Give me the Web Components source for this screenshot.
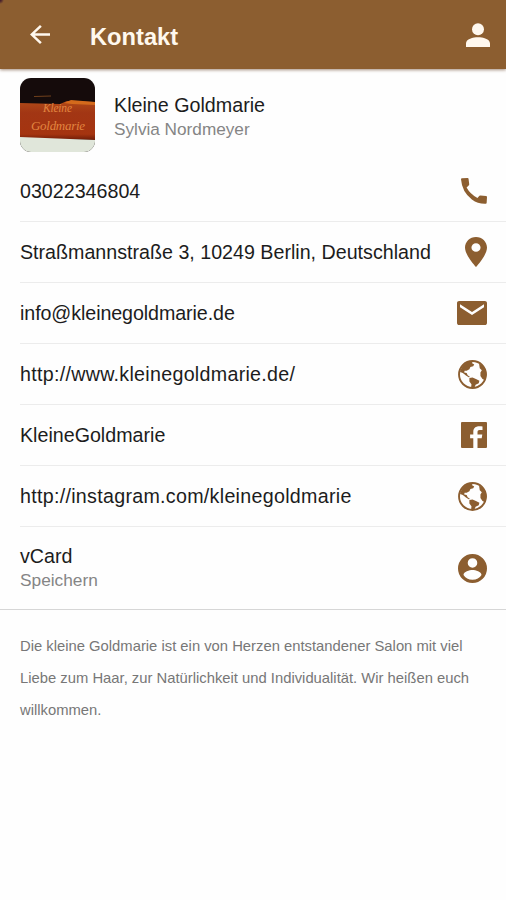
<!DOCTYPE html>
<html lang="de">
<head>
<meta charset="utf-8">
<title>Kontakt</title>
<style>
    body {
        margin: 0;
        background: #fefefe;
        font-family: "Liberation Sans", Arial, sans-serif;
        --color-brand: #8c5e30;
        --color-text: #1c1c1c;
        --color-muted: #858585;
    }
</style>
</head>
<body>
<contact-page></contact-page>

<script>
// [width, height, viewBox, markup]
const ICONS = {
    back: [20, 19, '4 4 16 16', '<path d="M20 11H7.83l5.59-5.59L12 4l-8 8 8 8 1.41-1.41L7.83 13H20v-2z"/>'],
    person: [24, 24, '0 0 24 24', '<circle cx="12" cy="6.3" r="6"/><path d="M12 14.2c-5 0-12 1.6-12 6.4V24h24v-3.4c0-4.8-7-6.4-12-6.4z"/>'],
    call: [26, 26, '0 0 79 79', '<path d="M3 1 20 0Q23 0 23 3L25 19Q25 21 24 22L17 29Q27 48 50 61L56 54Q57 53 59 53L76 55Q79 55 79 58L78 75Q78 78 75 78 52 79 33 65 3 43 0 4 0 1 3 1Z"/>'],
    pin: [22, 30, '5 2 14 20', '<path d="M12 2C8.13 2 5 5.13 5 9c0 5.25 7 13 7 13s7-7.75 7-13c0-3.87-3.13-7-7-7zm0 9.9a2.9 2.9 0 1 1 0-5.8 2.9 2.9 0 0 1 0 5.8z"/>'],
    mail: [30, 24, '2 4 20 16', '<path d="M20.6 4H3.4C2.6 4 2 4.6 2 5.4v13.2c0 .8.6 1.4 1.4 1.4h17.2c.8 0 1.4-.6 1.4-1.4V5.4c0-.8-.6-1.4-1.4-1.4zM20 8.2l-8 5.2-8-5.2v-2l8 5.2 8-5.2v2z"/>'],
    globe: [29, 29, '0 0 84 84', `
        <circle cx="42" cy="42" r="39" fill="none" stroke="currentColor" stroke-width="5.5"/>
        <path d="M7 29 16 14 28 6 44 4 40 9 47 13 44 18 36 20 33 27 25 31 19 31 18 36 25 38 28 44 35 49 31 50 23 45 14 38 6 35Z"/>
        <path d="M33 52 42 51 52 55 62 60 60 67 51 72 47 81 38 80 39 70 33 62Z"/>
        <path d="M61 11 71 16 80 29 83 43 78 59 71 55 65 46 65 36 69 30 63 24Z"/>`],
    facebook: [26, 26, '0 0 26 26', '<path d="M1 0h24a1 1 0 0 1 1 1v24a1 1 0 0 1-1 1h-8.5V16.2h4.2l.6-3.8h-4.8v-2.2c0-1.4.6-2.1 2.1-2.1h2.9V4.5c-.8-.1-2-.2-3.2-.2-3.8 0-6 2.1-6 5.5v2.6H9.1v3.8h3.2V26H1a1 1 0 0 1-1-1V1a1 1 0 0 1 1-1z"/>'],
    contact: [29, 29, '2 2 20 20', '<path fill-rule="evenodd" d="M12 2a10 10 0 1 0 0 20 10 10 0 0 0 0-20zm0 2.9a3.3 3.3 0 1 1 0 6.6 3.3 3.3 0 0 1 0-6.6zm0 14.8c-2.7 0-5-1.3-6.2-3.3 0-2.2 4.1-3.4 6.2-3.4s6.2 1.2 6.2 3.4c-1.2 2-3.5 3.3-6.2 3.3z"/>']
};

class AppIcon extends HTMLElement {
    connectedCallback() {
        const [w, h, box, markup] = ICONS[this.getAttribute('name')];
        this.attachShadow({ mode: 'open' }).innerHTML = `
            <style>
                :host { display: flex; flex-shrink: 0; }
                svg { display: block; fill: currentColor; }
            </style>
            <svg width="${w}" height="${h}" viewBox="${box}" preserveAspectRatio="none">${markup}</svg>
        `;
    }
}

class AppToolbar extends HTMLElement {
    constructor() {
        super();
        this.attachShadow({ mode: 'open' }).innerHTML = `
            <style>
                :host {
                    display: flex;
                    align-items: center;
                    box-sizing: border-box;
                    height: 69px;
                    padding: 0 16px 0 30px;
                    background: radial-gradient(circle at 0 0, #46202c 1px, transparent 4px), var(--color-brand);
                    color: #fff8ee;
                    box-shadow: 0 1px 3px rgba(90, 50, 20, 0.55);
                }
                h1 {
                    flex: 1;
                    margin: 4px 0 0 40px;
                    font-size: 23.7px;
                    line-height: 28px;
                    font-weight: bold;
                }
            </style>
            <app-icon name="back"></app-icon>
            <h1><slot></slot></h1>
            <app-icon name="person"></app-icon>
        `;
    }
}

class SalonLogo extends HTMLElement {
    constructor() {
        super();
        this.attachShadow({ mode: 'open' }).innerHTML = `
            <style>
                :host {
                    display: block;
                    width: 75px;
                    height: 74px;
                    border-radius: 11px;
                    overflow: hidden;
                }
                svg { display: block; }
                text {
                    font-family: "Liberation Serif", serif;
                    font-style: italic;
                    fill: #e28540;
                }
            </style>
            <svg width="75" height="74" viewBox="0 0 75 74">
                <defs>
                    <linearGradient id="wood" x1="0" y1="0" x2="0" y2="1">
                        <stop offset="0" stop-color="#b04a18"/>
                        <stop offset="0.3" stop-color="#a23614"/>
                        <stop offset="0.85" stop-color="#a53410"/>
                        <stop offset="1" stop-color="#6e1c08"/>
                    </linearGradient>
                </defs>
                <rect width="75" height="74" fill="#150b0b"/>
                <path d="M0 25 40 26 47 23 75 24V62L0 60Z" fill="url(#wood)"/>
                <path d="M44 25 51 22 75 24V27L52 26Z" fill="#d46a1c"/>
                <path d="M14 18.5 31 18" stroke="#70401c" stroke-width="1"/>
                <path d="M0 59 75 62V74H0Z" fill="#e0e6da"/>
                <text x="23" y="34" font-size="11.5" textLength="29">Kleine</text>
                <text x="11" y="52" font-size="13" textLength="54">Goldmarie</text>
            </svg>
        `;
    }
}

class ContactHeader extends HTMLElement {
    constructor() {
        super();
        this.attachShadow({ mode: 'open' }).innerHTML = `
            <style>
                :host {
                    display: flex;
                    gap: 19px;
                    box-sizing: border-box;
                    height: 92px;
                    padding: 9px 20px 0;
                }
                .names { padding-top: 15px; }
                .name { font-size: 19.7px; line-height: 24px; color: var(--color-text); }
                .person { font-size: 17.2px; line-height: 24px; color: var(--color-muted); }
            </style>
            <salon-logo></salon-logo>
            <div class="names">
                <div class="name"><slot></slot></div>
                <div class="person"><slot name="person"></slot></div>
            </div>
        `;
    }
}

class ContactRow extends HTMLElement {
    connectedCallback() {
        this.attachShadow({ mode: 'open' }).innerHTML = `
            <style>
                :host {
                    display: block;
                    padding-left: 20px;
                    color: var(--color-text);
                }
                .row {
                    display: flex;
                    align-items: center;
                    justify-content: space-between;
                    box-sizing: border-box;
                    height: 61px;
                    padding-right: 19px;
                    border-bottom: 1px solid #ececec;
                }
                .label { font-size: 19.67px; line-height: 24px; white-space: nowrap; }
                .note { font-size: 17.3px; line-height: 24px; color: var(--color-muted); }
                app-icon { color: var(--color-brand); }
                :host([icon="mail"]) .label { letter-spacing: -0.08px; }
                :host([icon="globe"]) .label { letter-spacing: 0.29px; }
                :host([last]) { padding-left: 0; }
                :host([last]) .row {
                    height: 83px;
                    padding-left: 20px;
                    border-bottom-color: #d6d6d6;
                }
            </style>
            <div class="row">
                <div>
                    <div class="label"><slot></slot></div>
                    <div class="note"><slot name="note"></slot></div>
                </div>
                <app-icon name="${this.getAttribute('icon')}"></app-icon>
            </div>
        `;
    }
}

class ContactPage extends HTMLElement {
    constructor() {
        super();
        this.attachShadow({ mode: 'open' }).innerHTML = `
            <style>
                :host { display: block; min-height: 900px; }
                p {
                    margin: 0;
                    padding: 20px 20px 0;
                    font-size: 14.8px;
                    line-height: 32px;
                    color: #777;
                }
            </style>
            <app-toolbar>Kontakt</app-toolbar>
            <contact-header>Kleine Goldmarie<span slot="person">Sylvia Nordmeyer</span></contact-header>
            <contact-row icon="call">03022346804</contact-row>
            <contact-row icon="pin">Straßmannstraße 3, 10249 Berlin, Deutschland</contact-row>
            <contact-row icon="mail">info@kleinegoldmarie.de</contact-row>
            <contact-row icon="globe">http://www.kleinegoldmarie.de/</contact-row>
            <contact-row icon="facebook">KleineGoldmarie</contact-row>
            <contact-row icon="globe">http://instagram.com/kleinegoldmarie</contact-row>
            <contact-row icon="contact" last>vCard<span slot="note">Speichern</span></contact-row>
            <p>Die kleine Goldmarie ist ein von Herzen entstandener Salon mit viel<br>Liebe zum Haar, zur Natürlichkeit und Individualität. Wir heißen euch<br>willkommen.</p>
        `;
    }
}

customElements.define('app-icon', AppIcon);
customElements.define('app-toolbar', AppToolbar);
customElements.define('salon-logo', SalonLogo);
customElements.define('contact-header', ContactHeader);
customElements.define('contact-row', ContactRow);
customElements.define('contact-page', ContactPage);
</script>
</body>
</html>
